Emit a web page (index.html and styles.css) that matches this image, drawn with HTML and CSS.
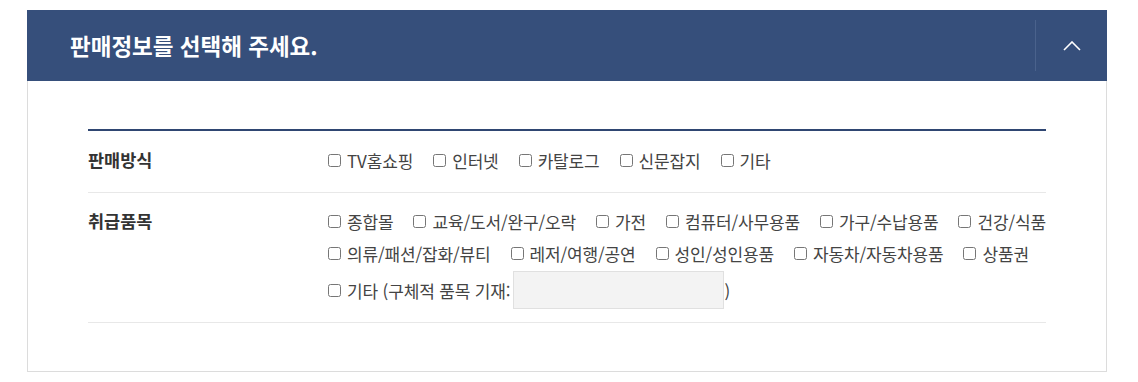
FILE: index.html
```html
<!DOCTYPE html>
<html lang="ko">
<head>
<meta charset="utf-8">
<link rel="stylesheet" href="styles.css">
</head>
<body>
<section class="panel">
  <header class="panel-head">
    <h2 class="panel-title">판매정보를 선택해 주세요.</h2>
    <button class="toggle" type="button" aria-label="접기">
      <svg width="18" height="10" viewBox="0 0 18 10"><polyline points="1,9 9,1 17,9" fill="none" stroke="#fff" stroke-width="1.6"/></svg>
    </button>
  </header>
  <div class="panel-body">
    <div class="form-table">
      <div class="form-row row-method">
        <div class="form-label">판매방식</div>
        <div class="form-options">
          <div class="opt-line">
            <label class="opt"><input type="checkbox"><span>TV홈쇼핑</span></label>
            <label class="opt"><input type="checkbox"><span>인터넷</span></label>
            <label class="opt"><input type="checkbox"><span>카탈로그</span></label>
            <label class="opt"><input type="checkbox"><span>신문잡지</span></label>
            <label class="opt"><input type="checkbox"><span>기타</span></label>
          </div>
        </div>
      </div>
      <div class="form-row row-items">
        <div class="form-label">취급품목</div>
        <div class="form-options">
          <div class="opt-line">
            <label class="opt"><input type="checkbox"><span>종합몰</span></label>
            <label class="opt"><input type="checkbox"><span>교육/도서/완구/오락</span></label>
            <label class="opt"><input type="checkbox"><span>가전</span></label>
            <label class="opt"><input type="checkbox"><span>컴퓨터/사무용품</span></label>
            <label class="opt"><input type="checkbox"><span>가구/수납용품</span></label>
            <label class="opt"><input type="checkbox"><span>건강/식품</span></label>
          </div>
          <div class="opt-line">
            <label class="opt"><input type="checkbox"><span>의류/패션/잡화/뷰티</span></label>
            <label class="opt"><input type="checkbox"><span>레저/여행/공연</span></label>
            <label class="opt"><input type="checkbox"><span>성인/성인용품</span></label>
            <label class="opt"><input type="checkbox"><span>자동차/자동차용품</span></label>
            <label class="opt"><input type="checkbox"><span>상품권</span></label>
          </div>
          <div class="opt-line opt-line-input">
            <label class="opt"><input type="checkbox"><span>기타 (구체적 품목 기재:</span></label>
            <input class="etc-input" type="text"><span class="paren">)</span>
          </div>
        </div>
      </div>
    </div>
  </div>
</section>
</body>
</html>
```
FILE: styles.css
```css
* { box-sizing: border-box; }
body {
  margin: 0;
  padding: 10px 0 0 27px;
  background: #fff;
  font-family: "Noto Sans CJK KR", "Noto Sans", sans-serif;
  color: #333;
}
.panel {
  width: 1080px;
  border: 1px solid #dcdcdc;
  border-top: 0;
}
.panel-head {
  height: 71px;
  margin: 0 -1px;
  background: #364f7b;
  display: flex;
  align-items: center;
  justify-content: space-between;
}
.panel-title {
  margin: 0 0 0 43px;
  color: #fff;
  font-size: 22.5px;
  font-weight: 700;
  line-height: 1;
}
.toggle {
  width: 72px;
  height: 51px;
  border: 0;
  border-left: 1px solid #4a628c;
  background: transparent;
  display: flex;
  align-items: center;
  justify-content: center;
  padding: 0;
  cursor: pointer;
}
.panel-body {
  padding: 48px 60px 48px;
}
.form-table {
  border-top: 2px solid #2f4672;
}
.form-row {
  display: flex;
  border-bottom: 1px solid #e8e8e8;
}
.row-method { padding: 13px 0 16px; }
.row-items { padding: 12px 0 13px; }
.form-label {
  width: 240px;
  flex: none;
  font-size: 17.5px;
  font-weight: 700;
  line-height: 32px;
  color: #333;
}
.form-options {
  flex: 1;
}
.opt-line {
  display: flex;
  align-items: center;
  gap: 20px;
  height: 32px;
}
.opt-line-input {
  height: 38px;
  margin-top: 2px;
  gap: 0;
}
.opt {
  display: inline-flex;
  align-items: center;
  gap: 6px;
  font-size: 17px;
  letter-spacing: -0.15px;
  color: #444;
  white-space: nowrap;
}
.opt input {
  margin: 0;
  width: 13px;
  height: 13px;
}
.etc-input {
  margin-left: 3px;
  width: 211px;
  height: 38px;
  background: #f3f3f3;
  border: 1px solid #e0e0e0;
  padding: 0 8px;
}
.paren {
  font-size: 17px;
  color: #444;
}
```
